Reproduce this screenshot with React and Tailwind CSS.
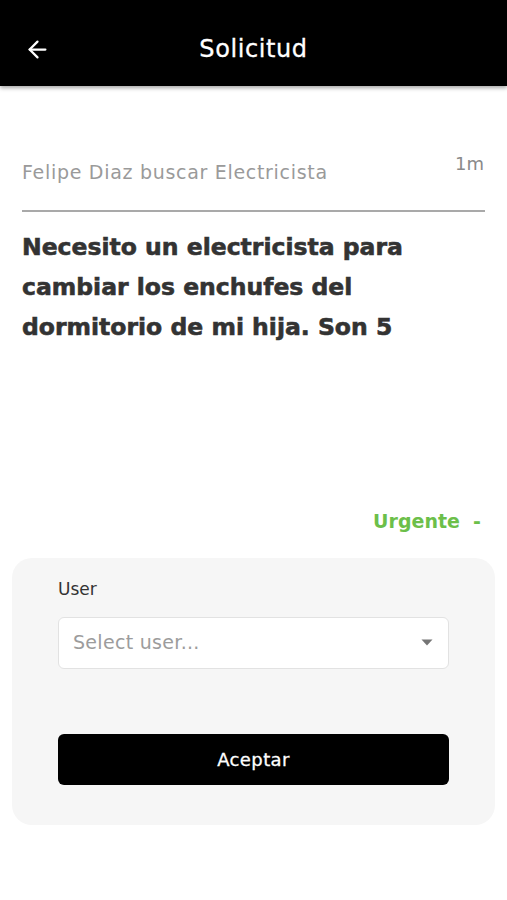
import { ArrowLeft } from 'lucide-react';

const App = () => {
  return (
    <div className="min-h-[900px] bg-white font-['DejaVu_Sans',sans-serif] flex flex-col">
      {/* Header */}
      <header className="h-[86px] bg-black flex items-center px-[24px] shadow-[0_2px_4px_rgba(0,0,0,0.35)] relative">
        <ArrowLeft size={27} strokeWidth={2} className="text-white mt-[12px]" />
        <h1 className="absolute left-0 right-0 text-center text-white text-[24px] tracking-[0.6px] mt-[12px] pointer-events-none [-webkit-text-stroke:0.3px_white]">
          Solicitud
        </h1>
      </header>

      <main className="flex-1 flex flex-col">
        {/* Request info */}
        <div className="px-[22px] pt-[64px]">
          <div className="flex justify-between items-start">
            <span className="text-[#9a9a9a] text-[19px] tracking-[0.7px] mt-[8px]">Felipe Diaz buscar Electricista</span>
            <span className="text-[#8a8a8a] text-[18px] mr-[1px]">1m</span>
          </div>
          <div className="h-[2px] bg-[#a9a9a9] mt-[23px]"></div>
          <p className="text-[#333333] text-[23.5px] font-bold leading-[40px] mt-[15px] pr-[60px] [-webkit-text-stroke:0.6px_#333333]">
            Necesito un electricista para cambiar los enchufes del dormitorio de mi hija. Son 5
          </p>
        </div>

        <div className="flex justify-end px-[26px] mt-[160px]">
          <span className="text-[#6cbf4a] text-[19px] font-semibold">Urgente&nbsp;&nbsp;-</span>
        </div>

        {/* Form card */}
        <div className="mx-[12px] mt-[23px] bg-[#f6f6f6] rounded-[20px] px-[46px] pt-[19px] pb-[40px]">
          <label className="block text-[#333333] text-[17px]">User</label>
          <div className="mt-[14px] h-[52px] bg-white border border-[#e2e2e2] rounded-[6px] flex items-center justify-between pl-[14px] pr-[14px]">
            <span className="text-[#9c9c9c] text-[19px] tracking-[0.3px]">Select user...</span>
            <svg width="12" height="7" viewBox="0 0 12 7" className="mr-[1px]">
              <path d="M0.5 0.5 L11.5 0.5 L6 6.5 Z" fill="#757575" />
            </svg>
          </div>
          <button className="w-full mt-[65px] h-[51px] bg-black rounded-[6px] text-white text-[18px] tracking-[0.4px] [-webkit-text-stroke:0.3px_white]">
            Aceptar
          </button>
        </div>
      </main>
    </div>
  );
};

export default App;
